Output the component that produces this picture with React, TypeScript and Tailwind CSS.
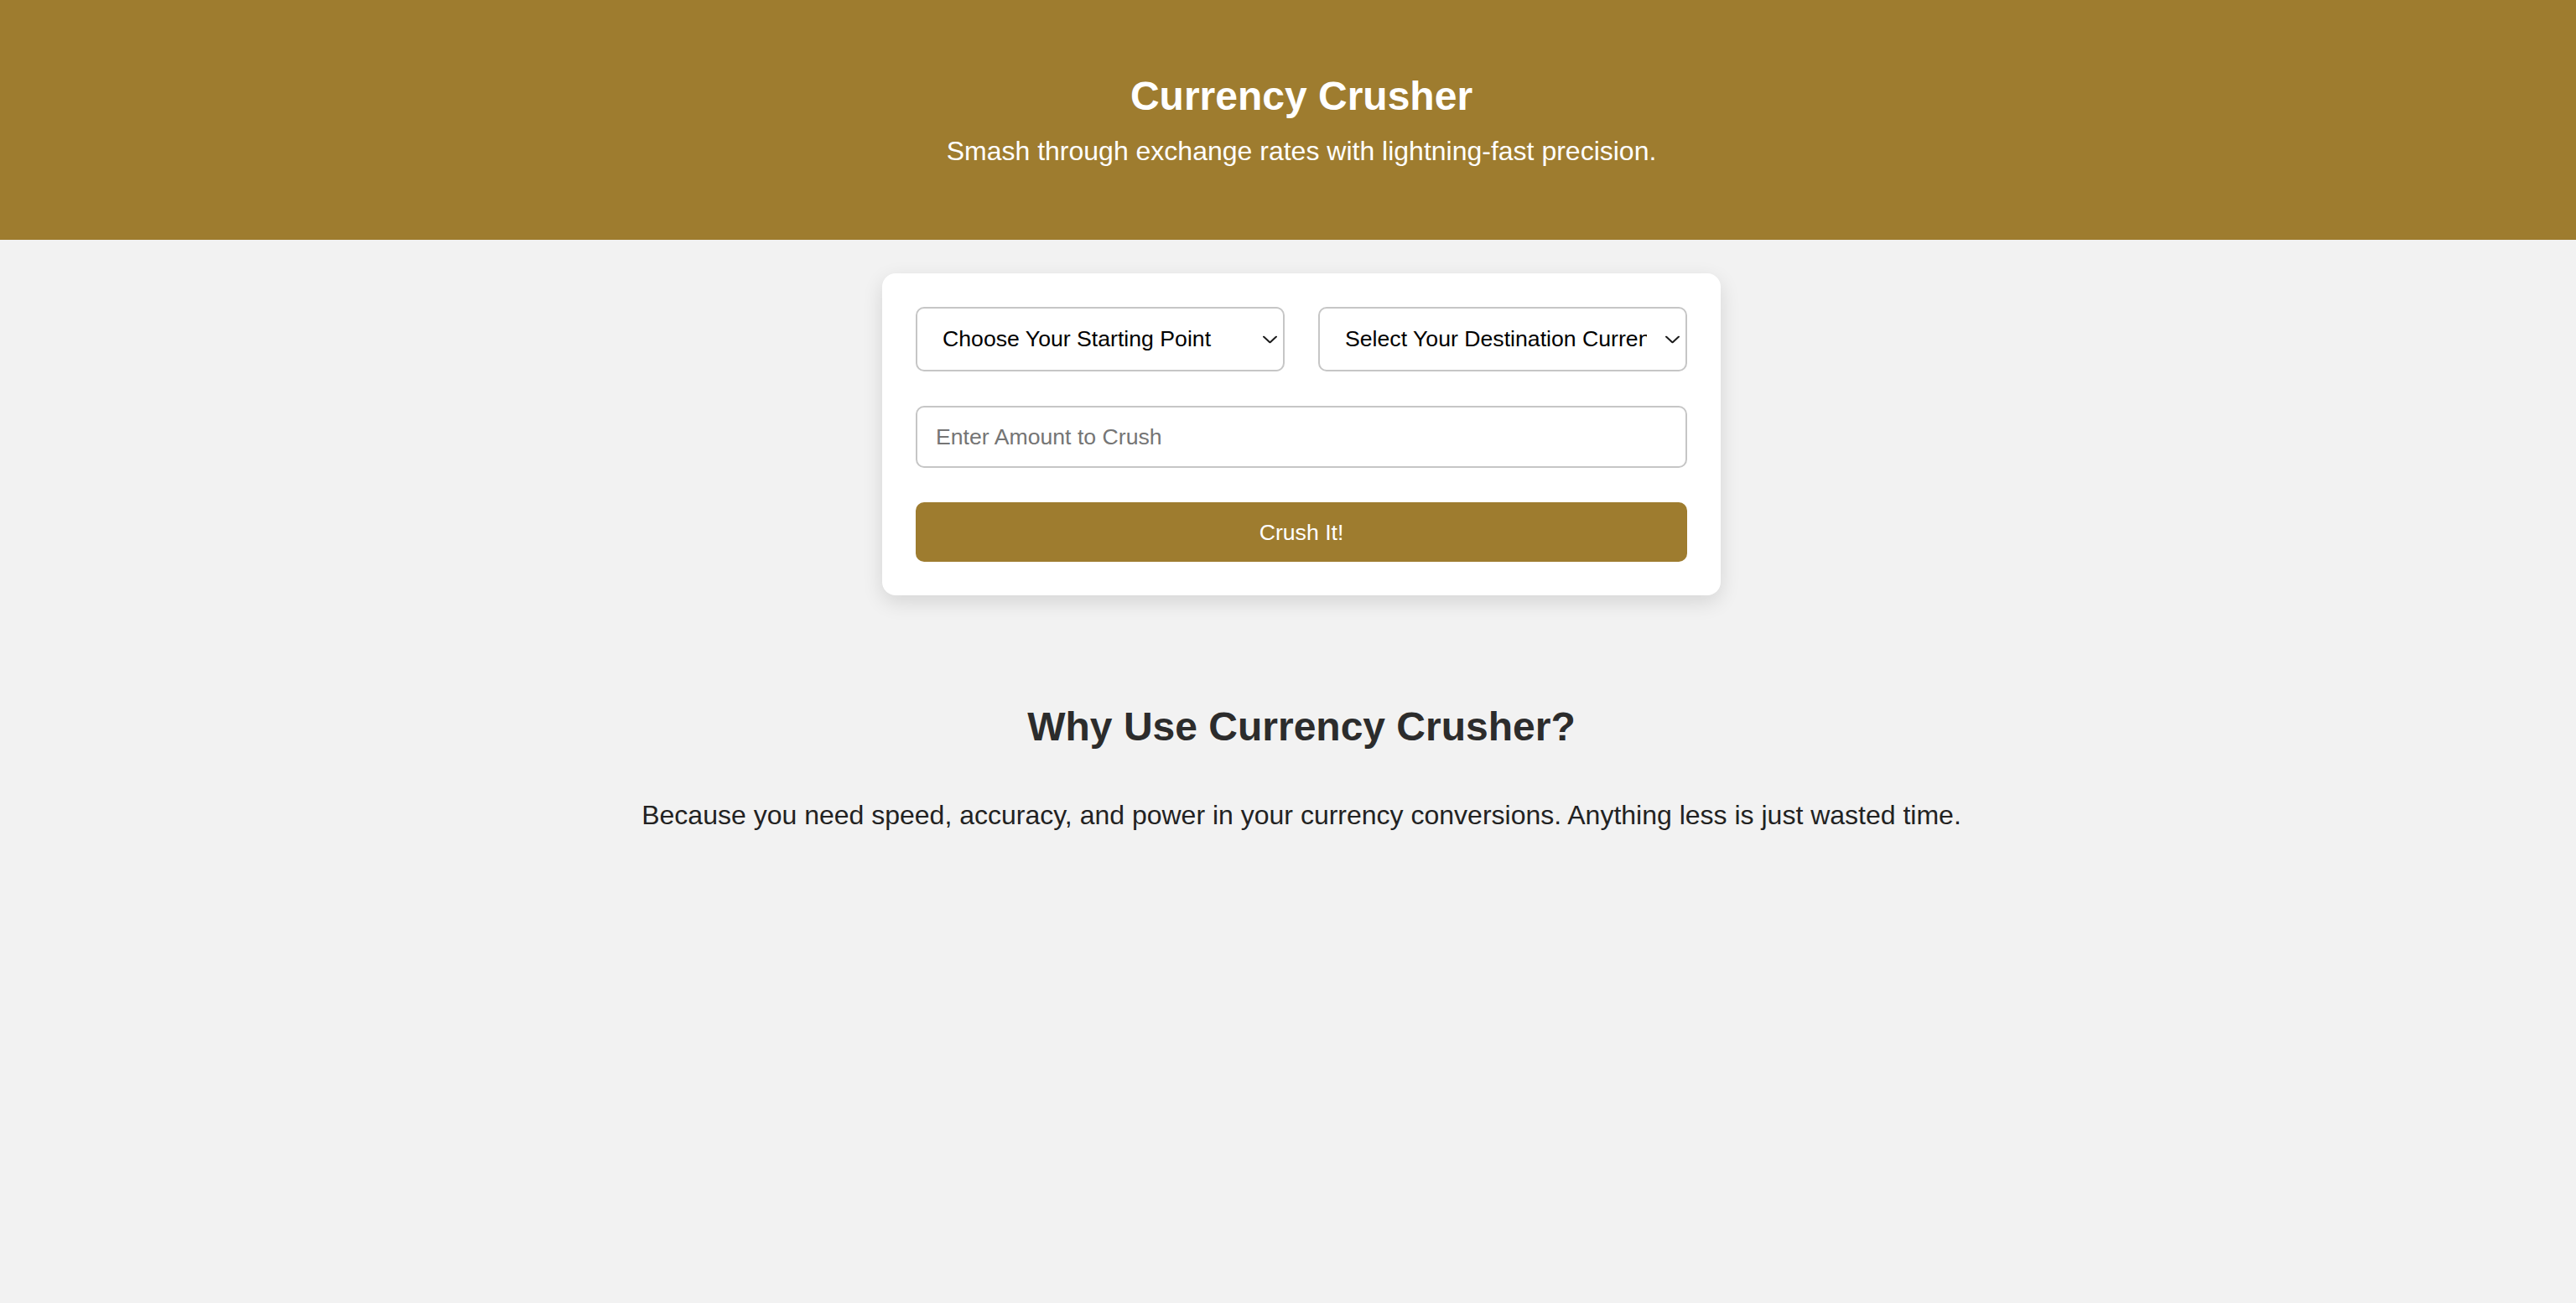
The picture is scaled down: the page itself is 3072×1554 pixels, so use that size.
import { useState } from "react";

const font = "font-['Liberation_Sans',Arial,Helvetica,sans-serif]";

function Chevron() {
  return (
    <svg
      className="pointer-events-none absolute right-[9px] top-1/2 -translate-y-1/2"
      width="17"
      height="9"
      viewBox="0 0 17 9"
      fill="none"
    >
      <path d="M1 1 L8.5 8 L16 1" stroke="#1c1c1c" strokeWidth="2" strokeLinecap="round" strokeLinejoin="round" />
    </svg>
  );
}

function CurrencySelect({ placeholder }: { placeholder: string }) {
  return (
    <div className="relative w-full">
      <select
        defaultValue=""
        className="block h-[77px] w-full appearance-none overflow-hidden rounded-[10px] border-2 border-[#c6c6c6] bg-white pl-[30px] pr-[46px] text-[26.67px] leading-none text-black outline-none"
      >
        <option value="" disabled>
          {placeholder}
        </option>
        <option value="USD">USD</option>
        <option value="EUR">EUR</option>
        <option value="GBP">GBP</option>
        <option value="JPY">JPY</option>
      </select>
      <Chevron />
    </div>
  );
}

export default function App() {
  const [amount, setAmount] = useState("");

  return (
    <div className={`min-h-screen bg-[#f2f2f2] ${font}`}>
      <header className="bg-[#9e7c2f] pt-[91px] pb-[90px] pl-[32px] text-center text-white">
        <h1 className="mb-[25px] text-[48px] font-bold leading-none">Currency Crusher</h1>
        <p className="text-[32px] leading-none">Smash through exchange rates with lightning-fast precision.</p>
      </header>

      <main className="pl-[32px]">
        <div className="mx-auto mt-[40px] w-[1000px] rounded-[16px] bg-white p-[40px] shadow-[0_8px_24px_rgba(0,0,0,0.12)]">
          <div className="grid grid-cols-2 gap-[40px]">
            <CurrencySelect placeholder="Choose Your Starting Point" />
            <CurrencySelect placeholder="Select Your Destination Currency" />
          </div>
          <input
            type="text"
            value={amount}
            onChange={(e) => setAmount(e.target.value)}
            placeholder="Enter Amount to Crush"
            className="mt-[41px] block h-[74px] w-full rounded-[10px] border-2 border-[#c6c6c6] bg-white px-[22px] text-[26.67px] text-black outline-none placeholder:text-[#757575]"
          />
          <button className="mt-[41px] block h-[71px] w-full rounded-[10px] bg-[#9e7c2f] text-[26.67px] text-white">
            Crush It!
          </button>
        </div>

        <section className="pt-[133px] text-center">
          <h2 className="text-[48px] font-bold leading-none text-[#2c2c2c]">Why Use Currency Crusher?</h2>
          <p className="mt-[65px] text-[32px] leading-none text-[#222222]">
            Because you need speed, accuracy, and power in your currency conversions. Anything less is just wasted time.
          </p>
        </section>
      </main>
    </div>
  );
}
